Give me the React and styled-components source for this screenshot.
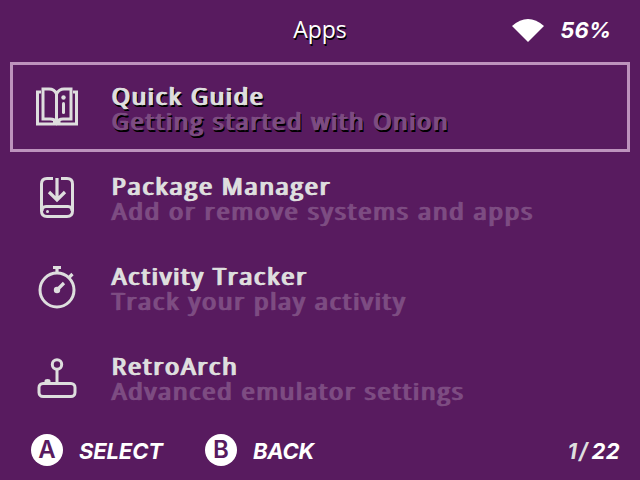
import React from "react";
import styled, { createGlobalStyle } from "styled-components";

const Global = createGlobalStyle`
  * { box-sizing: border-box; }
  body { margin: 0; background: #581b5f; overflow: hidden; }
`;

const Screen = styled.main`
  width: 640px;
  height: 480px;
  display: flex;
  flex-direction: column;
  background: #581b5f;
  color: #fff;
  font-family: "Open Sans", "Noto Sans", sans-serif;
`;

const Header = styled.header`
  height: 60px;
  padding-bottom: 2px;
  display: grid;
  grid-template-columns: 1fr auto 1fr;
  align-items: center;
`;

const Title = styled.h1`
  grid-column: 2;
  margin: 0;
  font-size: 23px;
  font-weight: 400;
  line-height: 32px;
  text-shadow: 1px 2px 0 #000;
`;

const Status = styled.div`
  display: flex;
  align-items: center;
  justify-content: flex-end;
  gap: 16px;
  padding: 2px 29px 0 0;
`;

const Label = styled.span`
  font-family: "Inter", sans-serif;
  font-size: 22px;
  line-height: 30px;
  font-weight: 700;
  font-style: italic;
  letter-spacing: ${(p) => p.$spacing || 0}px;
  white-space: nowrap;
`;

const List = styled.ul`
  height: 360px;
  margin: 0;
  padding: 2px 10px 0;
  list-style: none;
`;

const Item = styled.li`
  height: 90px;
  display: flex;
  align-items: center;
  border: 3px solid ${(p) => (p.$selected ? "#bd93bd" : "transparent")};
`;

const IconBox = styled.div`
  width: 48px;
  height: 48px;
  margin-left: 19px;
  flex: none;
  svg { display: block; }
`;

const Copy = styled.div`
  margin-left: 31px;
  padding-top: 4px;
  display: flex;
  flex-direction: column;
`;

/* Faux bold: the regular face is smeared two pixels to the right. */
const Line = styled.span`
  font-size: 23px;
  line-height: 25px;
  font-weight: 400;
  white-space: nowrap;
  -webkit-text-stroke: 0.3px currentColor;
  letter-spacing: ${(p) => p.$spacing}px;
  color: ${(p) => (p.$muted ? "#7d4c82" : "#dedede")};
  text-shadow: 1px 0 0 currentColor, 2px 0 0 currentColor
    ${(p) => (p.$shadow ? ", 1px 2px 0 #000, 2px 2px 0 #000, 3px 2px 0 #000" : "")};
`;

const Footer = styled.footer`
  height: 60px;
  display: flex;
  align-items: center;
  padding: 0 20px 0 31px;
`;

const Hint = styled.div`
  display: flex;
  align-items: center;
  gap: 16px;
  width: 174px;
  ${Label} { padding-top: 2px; }
`;

const Button = styled.span`
  width: 32px;
  height: 32px;
  border-radius: 50%;
  background: #fff;
  color: #581b5f;
  display: flex;
  align-items: center;
  justify-content: center;
  font: 600 24px/32px "Inter", sans-serif;
`;

const Pager = styled.div`
  display: flex;
  gap: 2px;
  margin-left: auto;
  padding-top: 2px;
  span:first-child { color: #dedede; }
`;

const Glyph = ({ children }) => (
  <IconBox>
    <svg width="48" height="48" viewBox="0 0 48 48" fill="none" stroke="#dedede" strokeWidth="3">
      {children}
    </svg>
  </IconBox>
);

const Book = () => (
  <Glyph>
    <path d="M9 9H5.500V41H44.500V9H41" />
    <path d="M11 6H17Q22.500 6 24.500 11Q27 6 32 6H39V36H31Q26.500 36 24.500 39.500Q23 36 18 36H11Z" />
    <path d="M24.500 11V40" />
    <path d="M31.500 20.500V29.500" strokeLinecap="round" />
    <circle cx="31.500" cy="14.500" r="2.200" fill="#dedede" stroke="none" />
    <path d="M21 39.500H28.500" />
  </Glyph>
);

const Disk = () => (
  <Glyph>
    <path d="M21 5.500H15Q9.500 5.500 9.500 11V38Q9.500 43.500 15 43.500H35Q40.500 43.500 40.500 38V11Q40.500 5.500 35 5.500H29" />
    <path d="M10 38Q10 33.500 14 33.500H36Q40 33.500 40 38" />
    <path d="M25 5V26M17 19L25 27L33 19" strokeWidth="3.200" />
    <circle cx="15.500" cy="38.500" r="1.500" fill="#dedede" stroke="none" />
  </Glyph>
);

const Stopwatch = () => (
  <Glyph>
    <circle cx="25" cy="27" r="17" />
    <path d="M21 4.500H29M25 4.500V10M37 14.500L40.500 11M25 27L32 20" strokeWidth="3.200" />
    <circle cx="25" cy="27" r="3.200" fill="#dedede" stroke="none" />
  </Glyph>
);

const Joystick = () => (
  <Glyph>
    <circle cx="25" cy="11.500" r="4.700" />
    <path d="M25 16V30" />
    <rect x="7" y="30.500" width="36" height="13" rx="4" />
    <path d="M12.500 30V28Q12.500 26 15.500 26T18.500 28V30Z" fill="#dedede" stroke="none" />
  </Glyph>
);

const apps = [
  { name: "Quick Guide", about: "Getting started with Onion", Icon: Book, spacing: [2.05, 2.03] },
  { name: "Package Manager", about: "Add or remove systems and apps", Icon: Disk, spacing: [2.03, 2.17] },
  { name: "Activity Tracker", about: "Track your play activity", Icon: Stopwatch, spacing: [2.08, 2.13] },
  { name: "RetroArch", about: "Advanced emulator settings", Icon: Joystick, spacing: [2.12, 2.08] },
];

export default function App() {
  return (
    <Screen>
      <Global />
      <Header>
        <Title>Apps</Title>
        <Status>
          <svg width="32" height="23" viewBox="0 0 32 23">
            <path d="M0 7Q16-7 32 7L16 23Z" fill="#fff" />
          </svg>
          <Label>56%</Label>
        </Status>
      </Header>
      <List>
        {apps.map(({ name, about, Icon, spacing }, i) => (
          <Item key={name} $selected={i === 0}>
            <Icon />
            <Copy>
              <Line $spacing={spacing[0]} $shadow={i === 0}>{name}</Line>
              <Line $muted $spacing={spacing[1]} $shadow={i === 0}>{about}</Line>
            </Copy>
          </Item>
        ))}
      </List>
      <Footer>
        <Hint><Button>A</Button><Label $spacing={-0.15}>SELECT</Label></Hint>
        <Hint><Button>B</Button><Label $spacing={-0.3}>BACK</Label></Hint>
        <Pager><Label $spacing={2}>1/</Label><Label $spacing={0.4}>22</Label></Pager>
      </Footer>
    </Screen>
  );
}
